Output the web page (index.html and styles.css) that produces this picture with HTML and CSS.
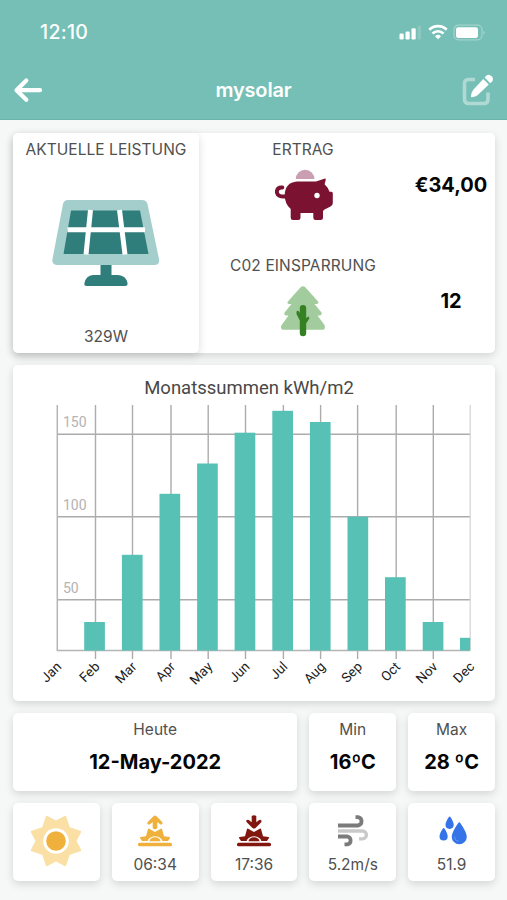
FILE: index.html
```html
<!DOCTYPE html>
<html lang="de">
<head>
<meta charset="utf-8">
<title>mysolar</title>
<link rel="stylesheet" href="styles.css">
</head>
<body>
<header class="header">
  <div class="status">
    <span class="clock">12:10</span>
    <svg class="status-icons" width="88" height="20" viewBox="0 0 88 20" fill="#fff">
      <rect x=".5" y="11.500" width="4.200" height="6" rx="1.200"/><rect x="6.500" y="9.500" width="4.200" height="8" rx="1.200"/><rect x="12.500" y="6.200" width="4.200" height="11.300" rx="1.200"/><rect x="18.500" y="3.500" width="3.500" height="14" rx="1.200" opacity=".15"/>
      <g fill="none" stroke="#fff" stroke-width="2.700"><path d="M30.300 7.800a12.300 12.300 0 0 1 17.400 0"/><path d="M33.500 11.500a7.800 7.800 0 0 1 11 0"/></g>
      <path d="M36 14.200a4.500 4.500 0 0 1 6 0L39 17.300z"/>
      <rect x="55" y="3.200" width="28" height="14.600" rx="4.500" fill="none" stroke="#fff" stroke-opacity=".32" stroke-width="1.200"/>
      <rect x="57" y="5.200" width="22" height="10.800" rx="2.200"/>
      <path d="M84.700 8.700q2 1.800 0 3.800z" opacity=".5"/>
    </svg>
  </div>
  <div class="nav">
    <svg width="30" height="26" viewBox="0 0 30 26" fill="none" stroke="#fff" stroke-width="4.200" stroke-linecap="round" stroke-linejoin="round"><path d="M13.300 3.500L3.500 13.200 13.300 22.800M3.700 13.200H27"/></svg>
    <h1 class="title">mysolar</h1>
    <svg width="34" height="34" viewBox="0 0 34 34" fill="#fff">
      <path d="M14 6.500H7.500Q3.500 6.500 3.500 10.500V26Q3.500 30.500 8 30.500H23Q27 30.500 27 26V19.500" fill="none" stroke="#fff" stroke-opacity=".42" stroke-width="3.600" stroke-linejoin="round"/>
      <path d="M22.300 5.900l5.500 5.500L16.500 22.300q-2 1.700-5.500 2-1.300 0-1-1.400.3-3.300 2.100-5.800z"/>
      <path d="M23.700 4.600l1.800-2q2.500-1.900 5.100.7 2.400 2.600.7 4.900l-2.100 2z"/>
    </svg>
  </div>
</header>
<main class="content">
  <section class="card overview">
    <div class="card power">
      <h2 class="label">AKTUELLE LEISTUNG</h2>
      <svg width="110" height="90" viewBox="0 0 110 90">
        <path d="M17 1H91Q95.500 1 96.500 5L108 60Q109 66 103.500 66H6.500Q.5 66 1.500 60L12 5Q13 1 17 1z" fill="#a4cecc"/>
        <path d="M20 11.500H89L97.500 55H12.500z" fill="#2f7e7b"/>
        <path d="M39.500 11L35 55.500M68.500 11L74 55.500M16.500 30.800H94" stroke="#fff" stroke-width="5"/>
        <path d="M49.500 66H60.500V76H67Q75 76.500 76.500 84 77 87 74 87H36Q32.500 87 33.500 84 35 76.500 42 76H49.500z" fill="#2f7e7b"/>
      </svg>
      <span class="value-small">329W</span>
    </div>
    <div class="stats">
      <div class="stat">
        <div class="stat-info">
          <h2 class="label">ERTRAG</h2>
          <svg class="pig" width="60" height="54" viewBox="0 0 60 54" fill="#7b1232">
            <path d="M20.800 10a9.300 9.300 0 0 1 18.600 0z" fill="#cb9fb2"/>
            <path d="M12 27.200Q1.800 28.500 1.800 22.500 2.500 18 7.300 18.500" fill="none" stroke="#7b1232" stroke-width="3.900" stroke-linecap="round"/>
            <path d="M22 12.500H41L50 9.600Q51 9.600 50.700 11L49.600 15.300Q53.500 19 54.500 22.700H56.500Q57.800 23 57.800 24.300V34Q57.800 36.500 55.500 37.500L49.500 40.500 48 42V48.500Q48 51 45.500 51H40.500Q38.300 51 38.300 48.500V44H25.500V48.500Q25.500 51 23 51H18Q15.700 51 15.700 48.500V40Q9.700 35 9.700 26 10 13.500 22 12.500z"/>
            <circle cx="42" cy="26.500" r="2.700" fill="#fff"/>
          </svg>
        </div>
        <strong class="number">€34,00</strong>
      </div>
      <div class="stat">
        <div class="stat-info">
          <h2 class="label wide">C02 EINSPARRUNG</h2>
          <svg width="46" height="52" viewBox="0 0 46 52">
            <path d="M20.400 2.500Q23 0 25.500 2.500L38.300 16.700Q39 18.800 36.500 19H34.500L41.500 27.500Q42.500 30 39.500 30.500H37.500L44.500 40Q46 44.800 42.500 44.800H3.500Q0 44.500 1.300 40.500L8.500 30.500H6.300Q3.500 30 4.600 27.500L11.500 19H9Q6.800 18.500 7.700 16.700z" fill="#a3cc9e"/>
            <path d="M19.800 23.300a3.200 3.200 0 0 1 6.400 0V33.300L28 31.500Q29.500 31.500 29.300 33.500L26.200 38.500V48a3.200 3.200 0 0 1-6.400 0V35.500L16.500 29V26.500Q17.500 25 19 26.500L19.800 28z" fill="#368024"/>
          </svg>
        </div>
        <strong class="number">12</strong>
      </div>
    </div>
  </section>

  <section class="card chart-card">
    <h2 class="chart-title">Monatssummen kWh/m2</h2>
    <svg class="chart" width="482" height="295" viewBox="0 0 482 295">
      <path class="grid" d="M82.500 0V254M119.500 0V254M158 0V254M195.200 0V254M232.500 0V254M270.400 0V254M307.600 0V254M344.600 0V254M383.200 0V254M420.300 0V254M44.300 29.300H457M44.300 111.700H457M44.300 194.700H457"/>
      <path class="axis" d="M44.300 0V245.500H457"/>
      <path class="edge" d="M457.200 0V245.500"/>
      <g class="bars">
        <rect x="71.200" y="217" width="20.700" height="28.500"/>
        <rect x="108.900" y="149.800" width="20.700" height="95.700"/>
        <rect x="146.500" y="88.800" width="20.700" height="156.700"/>
        <rect x="184.100" y="58.500" width="20.700" height="187"/>
        <rect x="221.600" y="27.700" width="20.700" height="217.800"/>
        <rect x="259.300" y="5.800" width="20.700" height="239.700"/>
        <rect x="296.900" y="17" width="20.700" height="228.500"/>
        <rect x="334.500" y="111.700" width="20.700" height="133.800"/>
        <rect x="372" y="172.200" width="20.700" height="73.300"/>
        <rect x="409.700" y="217" width="20.700" height="28.500"/>
        <rect x="447" y="232.800" width="10.200" height="12.700"/>
      </g>
      <g class="y-labels"><text x="50" y="22">150</text><text x="50" y="105">100</text><text x="50" y="187.500">50</text></g>
      <g class="x-labels">
        <text transform="translate(49.200 262.500) rotate(-45)">Jan</text>
        <text transform="translate(87.500 262.500) rotate(-45)">Feb</text>
        <text transform="translate(124.500 262.500) rotate(-45)">Mar</text>
        <text transform="translate(163 262.500) rotate(-45)">Apr</text>
        <text transform="translate(200.200 262.500) rotate(-45)">May</text>
        <text transform="translate(237.500 262.500) rotate(-45)">Jun</text>
        <text transform="translate(275.400 262.500) rotate(-45)">Jul</text>
        <text transform="translate(313.200 262.500) rotate(-45)">Aug</text>
        <text transform="translate(350 262.500) rotate(-45)">Sep</text>
        <text transform="translate(388.200 262.500) rotate(-45)">Oct</text>
        <text transform="translate(425.400 262.500) rotate(-45)">Nov</text>
        <text transform="translate(462.200 262.500) rotate(-45)">Dec</text>
      </g>
    </svg>
  </section>

  <section class="tiles">
    <div class="card tile today"><span class="caption">Heute</span><strong class="number">12-May-2022</strong></div>
    <div class="card tile"><span class="caption">Min</span><strong class="number">16ºC</strong></div>
    <div class="card tile"><span class="caption">Max</span><strong class="number">28 ºC</strong></div>

    <div class="card tile sun">
      <svg width="52" height="52" viewBox="-26 -26 52 52">
        <path d="M0-20.500L8.500-25Q10.300-25.800 10.500-23.500L13.800-13.800 23.500-10.500Q25.800-10.300 25-8.500L20.500 0 25 8.500Q25.800 10.300 23.500 10.500L13.800 13.800 10.500 23.500Q10.300 25.800 8.500 25L0 20.500-8.500 25Q-10.300 25.800-10.500 23.500L-13.800 13.800-23.500 10.500Q-25.800 10.300-25 8.500L-20.500 0-25-8.500Q-25.800-10.300-23.500-10.500L-13.800-13.800-10.500-23.500Q-10.300-25.800-8.500-25z" fill="#fae0a5"/>
        <circle r="12.800" fill="#fff"/><circle r="9.800" fill="#efb03c"/>
      </svg>
    </div>
    <div class="card tile">
      <svg class="icon" width="36" height="34" viewBox="0 0 36 34" fill="#efb03c">
        <path d="M10.500 9Q9.800 7.800 11 6.800L16.500 1.200Q18 0 19.500 1.200L25 6.800Q26 8 25.200 9 24 10 22.800 9L20.300 7V13Q18 15.500 15.700 13V7L13.200 9Q12 10 10.500 9z"/>
        <path d="M11 14Q11.300 13.300 12.200 13.800L18 17 23.800 13.800Q24.700 13.300 25 14L27 21.300 32.300 22Q33.300 22.200 33 23L31 26H5L3 23Q2.700 22.200 3.700 22L9 21.300z"/>
        <path d="M10.500 27a7.500 5.800 0 0 1 15 0z" fill="#fff"/><path d="M12.500 26.200a5.500 3.900 0 0 1 11 0z"/>
        <rect x="1" y="27.700" width="34" height="3.600" rx="1.500"/>
      </svg>
      <span class="caption">06:34</span>
    </div>
    <div class="card tile">
      <svg class="icon" width="36" height="34" viewBox="0 0 36 34" fill="#82170f">
        <path d="M15.700 1Q18-.5 20.300 1V7.200L22.800 5.200Q24 4.300 25.200 5.200 26 6.200 25 7.400L19.500 13Q18 14.200 16.500 13L11 7.400Q9.800 6.200 10.500 5.200 12 4.300 13.200 5.200L15.700 7.200z"/>
        <path d="M11 14Q11.300 13.300 12.200 13.800L18 17 23.800 13.800Q24.700 13.300 25 14L27 21.300 32.300 22Q33.300 22.200 33 23L31 26H5L3 23Q2.700 22.200 3.700 22L9 21.300z"/>
        <path d="M10.500 27a7.500 5.800 0 0 1 15 0z" fill="#fff"/><path d="M12.500 26.200a5.500 3.900 0 0 1 11 0z"/>
        <rect x="1" y="27.700" width="34" height="3.600" rx="1.500"/>
      </svg>
      <span class="caption">17:36</span>
    </div>
    <div class="card tile">
      <svg class="icon" width="36" height="34" viewBox="0 0 36 34" fill="none" stroke="#7b7b7b" stroke-width="3.800">
        <path d="M3 16H27.500A3.900 3.900 0 0 1 27.500 23.800H24" stroke="#c9c9c9" stroke-width="3.300"/>
        <path d="M3 10.500H23A4.200 4.200 0 0 0 23 2.200H20.500M3 21.500H12.500A4 4 0 0 1 12.500 29.300H9.500"/>
      </svg>
      <span class="caption">5.2m/s</span>
    </div>
    <div class="card tile">
      <svg class="icon" width="36" height="34" viewBox="0 0 36 34" fill="#3574e8">
        <path d="M14.800 2Q15.700 1 16.500 2 19.700 7 19.700 9.800a4.100 4.100 0 0 1-8.200 0Q11.500 7 14.800 2zM8.900 13.500Q9.700 12.500 10.500 13.500 13.700 18.500 13.700 21.500a4.100 4.100 0 0 1-8.200 0Q5.500 18.500 8.900 13.500zM24.200 8Q25.300 6.500 26.300 8 32.800 17.500 32.800 21.700a7.500 7.500 0 0 1-15.100 0Q17.700 17.500 24.200 8z"/>
        <path d="M20.300 21.500q.3 4.300 4.300 4.900" fill="none" stroke="#6c9bf2" stroke-width=".8"/>
      </svg>
      <span class="caption">51.9</span>
    </div>
  </section>
</main>
</body>
</html>
```
FILE: styles.css
```css
* { box-sizing: border-box; }

body {
  margin: 0;
  height: 900px;
  overflow: hidden;
  background: #f6f7f7;
  color: #505050;
  font-family: Inter, "Liberation Sans", sans-serif;
}

h1, h2 { margin: 0; font-weight: 400; }
svg { display: block; flex: none; }

.header {
  height: 120px;
  background: #76bfb6;
  color: #fff;
  border-bottom: 1px solid #6eb3aa;
}

.status {
  display: flex;
  justify-content: space-between;
  align-items: center;
  height: 60px;
  padding: 3px 20px 0 40px;
}

.clock { font-size: 19.5px; font-weight: 500; letter-spacing: .3px; }

.nav {
  display: flex;
  justify-content: space-between;
  align-items: center;
  height: 60px;
  padding: 0 12px 0 13px;
}

.title { font-size: 20px; font-weight: 600; letter-spacing: -.15px; margin-left: 3px; }

.content {
  display: flex;
  flex-direction: column;
  gap: 12px;
  padding: 13px 12px 0 13px;
}

.card {
  background: #fff;
  border-radius: 5px;
  box-shadow: 0 3px 8px rgba(0, 0, 0, .14);
}

.overview { display: flex; height: 220px; }

.power {
  display: flex;
  flex: none;
  flex-direction: column;
  align-items: center;
  justify-content: space-between;
  width: 186px;
  padding: 7px 0 6px;
}

.label { font-size: 15.5px; line-height: 20px; letter-spacing: .05px; white-space: nowrap; }
.wide { letter-spacing: .12px; }
.value-small { font-size: 15.5px; line-height: 20px; }

.stats { flex: 1; padding-top: 7px; }
.stat { display: grid; grid-template-columns: 208px 88px; height: 116px; }
.stat-info { display: flex; flex-direction: column; align-items: center; gap: 9px; }
.pig { margin-left: 3px; }
.stat .number { padding-top: 33px; text-align: center; }

.number { color: #050505; font-size: 20px; font-weight: 700; line-height: 24px; white-space: nowrap; }

.chart-card { height: 336px; padding-top: 11px; }
.chart-title { font: 400 18.5px/25px Roboto, sans-serif; text-align: center; margin-left: -10px; color: #484848; }
.chart { margin-top: 4px; }
.grid { fill: none; stroke: #acacac; stroke-width: 1.4; }
.axis { fill: none; stroke: #b5b5b5; stroke-width: 1.5; }
.edge { stroke: #d2d2d2; stroke-width: 1.2; }
.bars { fill: #57c1b6; }
.y-labels { fill: #b3b3b3; font: 14px Roboto, sans-serif; }
.x-labels { fill: #202020; font: 13.5px Roboto, sans-serif; text-anchor: end; }

.tiles { display: grid; grid-template-columns: repeat(5, 1fr); gap: 12px; }
.tile {
  display: flex;
  flex-direction: column;
  align-items: center;
  height: 78px;
  padding-top: 7px;
}
.today { grid-column: span 3; }
.caption { font-size: 15.5px; line-height: 20px; white-space: nowrap; }
.tile .number { margin-top: 10px; }
.icon { margin: 5px 0 6px; }
.sun { padding-top: 12px; }
```
